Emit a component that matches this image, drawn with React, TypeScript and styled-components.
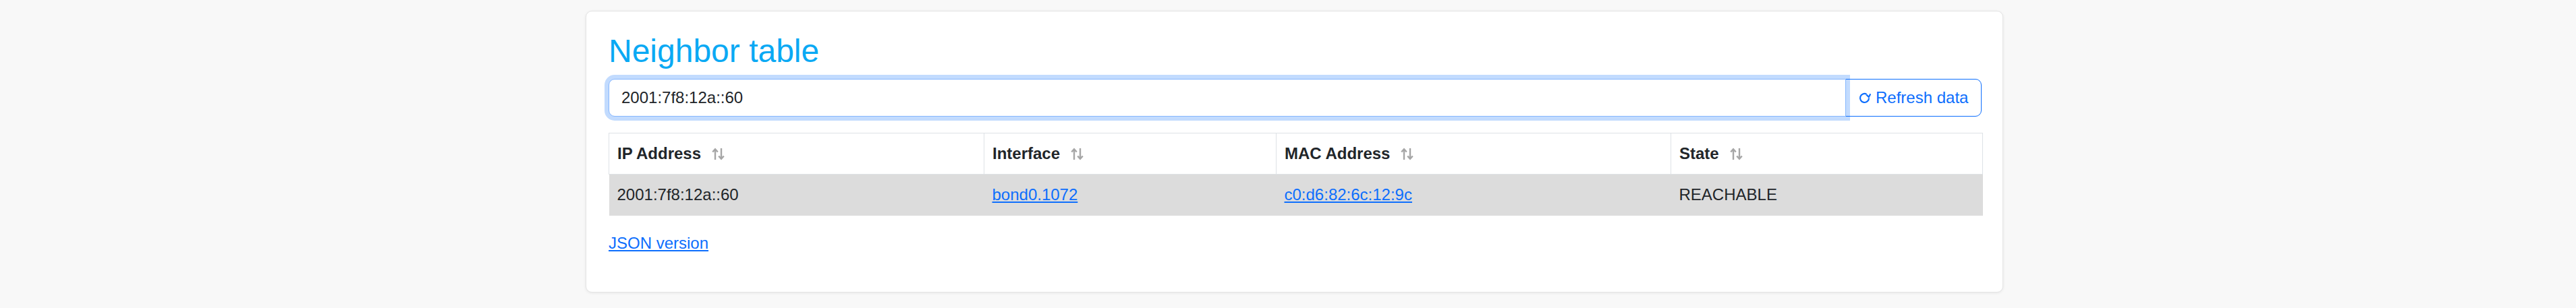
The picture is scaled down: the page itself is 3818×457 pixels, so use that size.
import * as React from "react";
import styled, { createGlobalStyle } from "styled-components";

const GlobalStyle = createGlobalStyle`
  html, body {
    margin: 0;
    padding: 0;
    background: #f8f8f8;
    font-family: "Liberation Sans", Arial, sans-serif;
    color: #212529;
  }
`;

const Page = styled.div`
  min-height: 100vh;
  box-sizing: border-box;
  padding: 16px 0 24px 19px;
  display: flex;
  justify-content: center;
  align-items: flex-start;
`;

const Card = styled.main`
  width: 2101px;
  box-sizing: border-box;
  background: #fff;
  border: 1px solid #e4e4e4;
  border-radius: 9px;
  box-shadow: 0 1px 4px rgba(0, 0, 0, 0.07);
  padding: 30px 31px 30px 33px;
`;

const Title = styled.h1`
  margin: 0 0 12px;
  font-size: 48px;
  font-weight: 400;
  line-height: 1.2;
  color: #0aa9f4;
`;

const InputGroup = styled.div`
  display: flex;
  align-items: stretch;
  height: 56px;
  margin-bottom: 24px;
`;

const SearchInput = styled.input`
  position: relative;
  z-index: 5;
  flex: 1;
  min-width: 0;
  box-sizing: border-box;
  height: 56px;
  padding: 9px 18px;
  font: inherit;
  font-size: 24px;
  line-height: 36px;
  color: #212529;
  background: #fff;
  border: 1px solid #86b7fe;
  border-radius: 9px 0 0 9px;
  box-shadow: 0 0 0 6px rgba(13, 110, 253, 0.25);
  outline: none;
`;

const RefreshButton = styled.button`
  display: flex;
  align-items: center;
  gap: 7px;
  width: 202px;
  margin-left: -1px;
  padding: 0 18px;
  box-sizing: border-box;
  font-family: "Liberation Sans", Arial, sans-serif;
  font-size: 24px;
  line-height: 36px;
  color: #0d6efd;
  background: transparent;
  border: 1px solid #0d6efd;
  border-radius: 0 9px 9px 0;
  cursor: pointer;
  white-space: nowrap;
`;

const Table = styled.table`
  width: 100%;
  border-collapse: collapse;
  table-layout: fixed;
  font-size: 24px;
  line-height: 36px;
`;

const HeadCell = styled.th<{ $width: number }>`
  box-sizing: border-box;
  width: ${(p) => p.$width}px;
  padding: 12px;
  text-align: left;
  font-weight: 700;
  color: #212529;
  border: 1px solid #dee2e6;
  white-space: nowrap;
`;

const BodyRow = styled.tr`
  background: #dcdcdc;
`;

const BodyCell = styled.td`
  padding: 12px;
  border-bottom: 1px solid #dcdcdc;
  color: #212529;
`;

const Link = styled.a`
  color: #0d6efd;
  text-decoration: underline;
`;

const SortIcon = styled.svg`
  display: inline-block;
  width: 19px;
  height: 19px;
  margin-left: 16px;
  vertical-align: -2px;
`;

const Footer = styled.p`
  margin: 23px 0 24px;
  font-size: 24px;
  line-height: 36px;
`;

const Sort = () => (
  <SortIcon viewBox="0 0 19 19" fill="none" stroke="#a6a6a6" strokeWidth="2.4">
    <path d="M5 18V2.5M1.2 6.5 5 2.3l3.8 4.2" />
    <path d="M14 1v15.5M10.2 12.5 14 16.7l3.8-4.2" />
  </SortIcon>
);

// clockwise gapped circle arrow
const RefreshIcon = () => (
  <svg width="19" height="19" viewBox="0 0 19 19" fill="none" stroke="#0d6efd" strokeWidth="2.2">
    <path d="M16 10.5A6.5 6.5 0 1 1 12.5 4.7" />
    <path d="M12.2 5.4 15.8 9l2.6-4.6" strokeLinejoin="miter" />
  </svg>
);

const columns = [
  { label: "IP Address", width: 556 },
  { label: "Interface", width: 433 },
  { label: "MAC Address", width: 585 },
  { label: "State", width: 462 },
];

export default function App() {
  const inputRef = React.useRef<HTMLInputElement>(null);
  const value = "2001:7f8:12a::60";

  React.useEffect(() => {
    const el = inputRef.current;
    if (el) {
      el.focus();
      el.setSelectionRange(value.length, value.length);
    }
  }, []);

  return (
    <>
      <GlobalStyle />
      <Page>
        <Card>
          <Title>Neighbor table</Title>
          <InputGroup>
            <SearchInput ref={inputRef} defaultValue={value} />
            <RefreshButton>
              <RefreshIcon />
              Refresh data
            </RefreshButton>
          </InputGroup>
          <Table>
            <thead>
              <tr>
                {columns.map((c) => (
                  <HeadCell key={c.label} $width={c.width}>
                    {c.label}
                    <Sort />
                  </HeadCell>
                ))}
              </tr>
            </thead>
            <tbody>
              <BodyRow>
                <BodyCell>2001:7f8:12a::60</BodyCell>
                <BodyCell>
                  <Link href="#">bond0.1072</Link>
                </BodyCell>
                <BodyCell>
                  <Link href="#">c0:d6:82:6c:12:9c</Link>
                </BodyCell>
                <BodyCell>REACHABLE</BodyCell>
              </BodyRow>
            </tbody>
          </Table>
          <Footer>
            <Link href="#">JSON version</Link>
          </Footer>
        </Card>
      </Page>
    </>
  );
}
